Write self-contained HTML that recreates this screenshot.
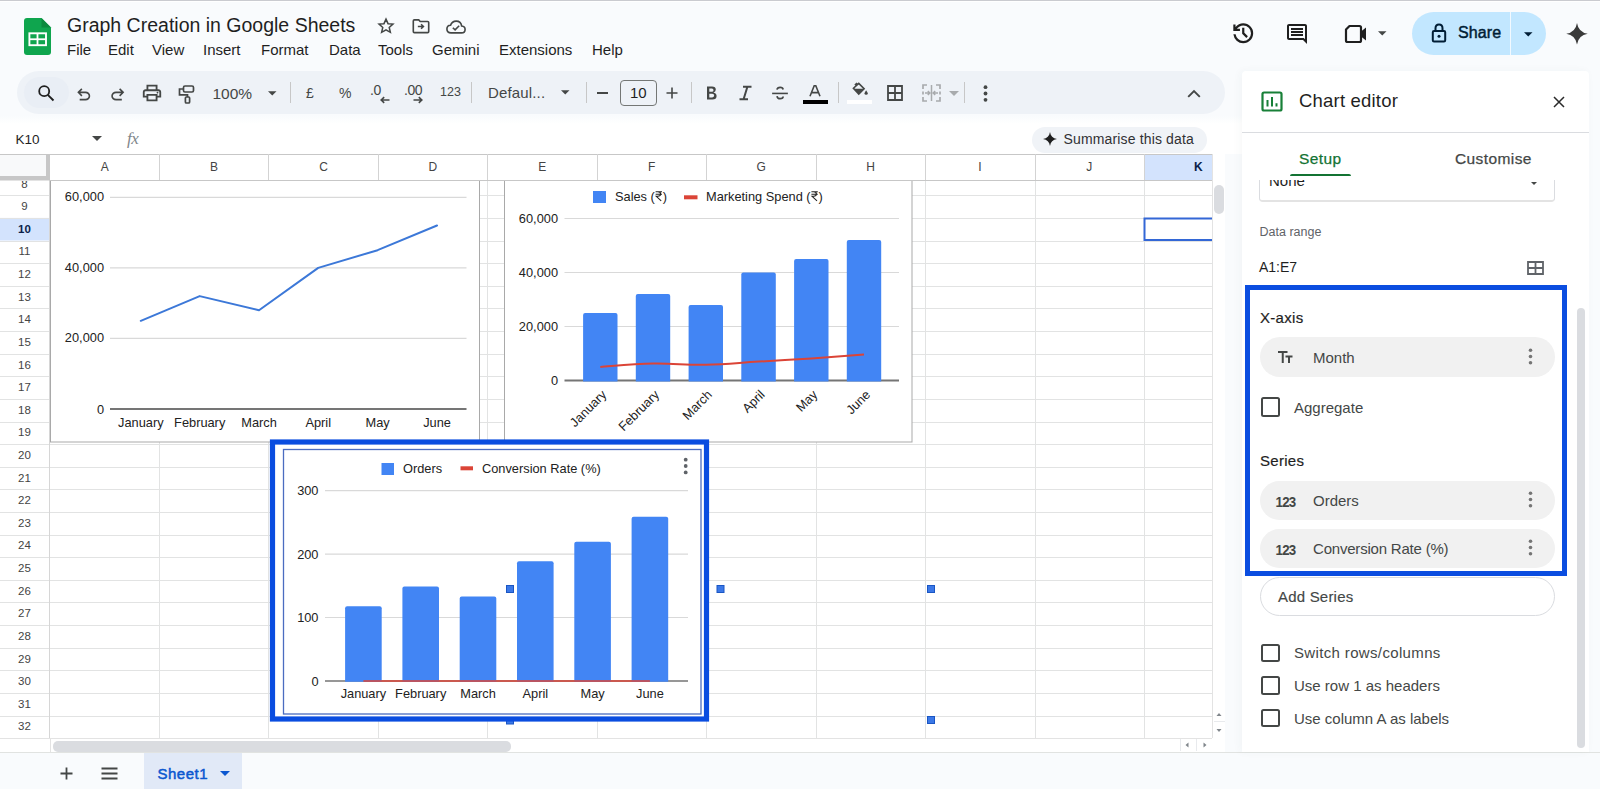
<!DOCTYPE html>
<html><head><meta charset="utf-8">
<style>
*{box-sizing:border-box;margin:0;padding:0}
html,body{width:1600px;height:789px;overflow:hidden;background:#f9fbfd;font-family:"Liberation Sans",sans-serif;color:#1f1f1f;position:relative}
.a{position:absolute}
.t{position:absolute;white-space:nowrap;line-height:1}
svg{position:absolute;overflow:visible}
</style></head><body>
<!-- top line -->
<div class="a" style="left:0;top:0;width:1600px;height:1px;background:#cacbd0"></div><div class="a" style="left:0;top:1px;width:1600px;height:1px;background:#fff"></div>

<!-- logo -->
<svg style="left:24px;top:18px" width="27" height="37" viewBox="0 0 27 37">
<path d="M3 0H17.5L27 9.5V34Q27 37 24 37H3Q0 37 0 34V3Q0 0 3 0Z" fill="#0fa54e"/>
<path d="M17.5 0L27 9.5H17.5Z" fill="#0b8a3e"/>
<rect x="5.4" y="15.3" width="16.6" height="11.9" fill="none" stroke="#fff" stroke-width="1.9"/>
<line x1="5.4" y1="21.25" x2="22" y2="21.25" stroke="#fff" stroke-width="1.8"/>
<line x1="13.5" y1="15.3" x2="13.5" y2="27.2" stroke="#fff" stroke-width="1.8"/>
</svg>

<div class="t" style="left:67px;top:16px;font-size:19.5px;color:#1f1f1f">Graph Creation in Google Sheets</div>

<div id="menu" class="t" style="left:67px;top:42px;font-size:15px;color:#1f1f1f">
<span style="position:absolute;left:0">File</span>
<span style="position:absolute;left:41px">Edit</span>
<span style="position:absolute;left:85px">View</span>
<span style="position:absolute;left:136px">Insert</span>
<span style="position:absolute;left:194px">Format</span>
<span style="position:absolute;left:262px">Data</span>
<span style="position:absolute;left:311px">Tools</span>
<span style="position:absolute;left:365px">Gemini</span>
<span style="position:absolute;left:432px">Extensions</span>
<span style="position:absolute;left:525px">Help</span>
</div>

<!-- title icons -->
<svg style="left:376px;top:17px" width="20" height="18" viewBox="0 0 24 24"><path d="M12 2.8l2.7 6.1 6.6.6-5 4.4 1.5 6.5L12 17l-5.8 3.4 1.5-6.5-5-4.4 6.6-.6z" fill="none" stroke="#444746" stroke-width="2" stroke-linejoin="miter"/></svg>
<svg style="left:411.5px;top:19px" width="18" height="14.5" viewBox="0 0 19 16"><path d="M1 2.2Q1 1 2.2 1H7L8.6 2.7H16.8Q18 2.7 18 3.9V13.8Q18 15 16.8 15H2.2Q1 15 1 13.8Z" fill="none" stroke="#444746" stroke-width="1.8"/><path d="M6 8.3H12M9.6 5.8L12.2 8.3 9.6 10.8" fill="none" stroke="#444746" stroke-width="1.7"/></svg>
<svg style="left:446px;top:19.5px" width="20" height="14" viewBox="0 0 22 15"><path d="M5.5 14Q1 14 1 9.8Q1 5.8 5 5.6Q6.5 1 11.2 1Q16.5 1 17.2 6.4Q21 6.8 21 10.2Q21 14 17 14Z" fill="none" stroke="#444746" stroke-width="1.8"/><path d="M7.5 8.3L10 10.7 14.5 6.2" fill="none" stroke="#444746" stroke-width="1.7"/></svg>

<!-- right header icons -->
<svg style="left:1230px;top:20px" width="26.5" height="26.5" viewBox="0 -960 960 960"><path fill="#1f1f1f" d="M480-120q-138 0-240.5-91.5T122-440h82q14 104 92.5 172T480-200q117 0 198.5-81.5T760-480q0-117-81.5-198.5T480-760q-69 0-129 32t-101 88h110v80H120v-240h80v94q51-64 124.5-99T480-840q75 0 140.5 28.5t114 77q48.5 48.5 77 114T840-480q0 75-28.5 140.5t-77 114q-48.5 48.5-114 77T480-120Zm112-192L440-464v-216h80v184l128 128-56 56Z"/></svg>
<svg style="left:1285px;top:22px" width="24" height="24" viewBox="0 0 24 24"><path fill="#1f1f1f" d="M21.99 4c0-1.1-.89-2-1.99-2H4c-1.1 0-2 .9-2 2v12c0 1.1.9 2 2 2h14l4 4-.01-18zM20 4v13.17L18.83 16H4V4h16zM6 12h12v2H6zm0-3h12v2H6zm0-3h12v2H6z"/></svg>
<svg style="left:1343px;top:21px" width="26" height="26" viewBox="0 0 26 26"><path d="M3 8.5L6.5 5H16.5Q18 5 18 6.5V19.5Q18 21 16.5 21H4.5Q3 21 3 19.5Z" fill="none" stroke="#1f1f1f" stroke-width="2.2" stroke-linejoin="round"/><path d="M18 10.5L23 6.5V19.5L18 15.5Z" fill="#1f1f1f"/></svg>
<svg style="left:1378px;top:31px" width="8.5" height="4.5" viewBox="0 0 10 5"><path d="M0 0H10L5 5Z" fill="#444746"/></svg>
<div class="a" style="left:1412px;top:12px;width:134px;height:43px;background:#c2e7ff;border-radius:22px"></div>
<div class="a" style="left:1509.5px;top:12px;width:1px;height:43px;background:#f2f9ff"></div>
<svg style="left:1431px;top:23px" width="16" height="20" viewBox="0 0 16 20"><rect x="1.8" y="8" width="12.4" height="10.5" rx="1.2" fill="none" stroke="#001d35" stroke-width="2"/><path d="M4.5 8V5.3Q4.5 1.5 8 1.5Q11.5 1.5 11.5 5.3V8" fill="none" stroke="#001d35" stroke-width="2"/><circle cx="8" cy="13.2" r="1.5" fill="#001d35"/></svg>
<div class="t" style="left:1458px;top:24.5px;font-size:16px;color:#001d35;letter-spacing:0.1px;-webkit-text-stroke:0.45px #001d35">Share</div>
<svg style="left:1523.5px;top:31.5px" width="8.5" height="4.5" viewBox="0 0 10 5"><path d="M0 0H10L5 5Z" fill="#001d35"/></svg>
<svg style="left:1565.5px;top:23px" width="22" height="21.5" viewBox="0 0 24 24"><path d="M12 0Q13.6 10.4 24 12Q13.6 13.6 12 24Q10.4 13.6 0 12Q10.4 10.4 12 0Z" fill="#3a3a3a"/></svg>

<!-- toolbar -->
<div class="a" style="left:17px;top:71px;width:1208px;height:43px;background:#eef2f7;border-radius:22px"></div>
<div class="a" style="left:24px;top:77px;width:45px;height:31px;background:#e9eef5;border-radius:16px"></div>
<svg style="left:36px;top:83px" width="20" height="20" viewBox="0 0 20 20"><circle cx="8.2" cy="8.2" r="5" fill="none" stroke="#1f1f1f" stroke-width="1.8"/><path d="M11.8 11.8L17.5 17.5" stroke="#1f1f1f" stroke-width="1.9"/></svg>
<svg style="left:74px;top:84.5px" width="19.5" height="19.5" viewBox="0 -960 960 960"><path fill="#444746" d="M280-200v-80h284q63 0 109.5-40T720-420q0-60-46.5-100T564-560H312l104 104-56 56-200-200 200-200 56 56-104 104h252q97 0 166.5 63T800-420q0 94-69.5 157T564-200H280Z"/></svg>
<svg style="left:107.5px;top:84.5px" width="19.5" height="19.5" viewBox="0 -960 960 960"><path fill="#444746" d="M396-200q-97 0-166.5-63T160-420q0-94 69.5-157T396-640h252L544-744l56-56 200 200-200 200-56-56 104-104H396q-63 0-109.5 40T240-420q0 60 46.5 100T396-280h284v80H396Z"/></svg>
<svg style="left:141px;top:82px" width="22" height="22" viewBox="0 -960 960 960"><path fill="#444746" d="M640-640v-120H320v120h-80v-200h480v200h-80Zm-480 80h640-640Zm560 100q17 0 28.5-11.5T760-500q0-17-11.5-28.5T720-540q-17 0-28.5 11.5T680-500q0 17 11.5 28.5T720-460Zm-80 260v-160H320v160h320Zm80 80H240v-160H80v-240q0-51 35-85.5t85-34.5h560q51 0 85.5 34.5T880-520v240H720v160Zm80-240v-160q0-17-11.5-28.5T760-560H200q-17 0-28.5 11.5T160-520v160h80v-80h480v80h80Z"/></svg>
<svg style="left:177.5px;top:84.5px" width="17" height="19" viewBox="0 0 17 19"><rect x="5.5" y="1" width="10" height="6" rx="1.5" fill="none" stroke="#444746" stroke-width="1.7"/><path d="M5.5 4H1.5V9.8H9.5V12" fill="none" stroke="#444746" stroke-width="1.7"/><rect x="7.4" y="12" width="4.2" height="6" rx="1" fill="none" stroke="#444746" stroke-width="1.7"/></svg>
<div class="t" style="left:212.5px;top:85.5px;font-size:15.5px;color:#444746">100%</div>
<svg style="left:268px;top:91px" width="8.5" height="4.5" viewBox="0 0 10 5"><path d="M0 0H10L5 5Z" fill="#444746"/></svg>
<div class="a" style="left:290px;top:82px;width:1px;height:21px;background:#c7c7c7"></div>
<div class="t" style="left:306px;top:86px;font-size:14px;color:#444746">£</div>
<div class="t" style="left:339px;top:86px;font-size:14px;color:#444746">%</div>
<div class="t" style="left:370px;top:83px;font-size:14px;color:#444746;letter-spacing:-0.5px">.0</div>
<svg style="left:380px;top:96px" width="10" height="8" viewBox="0 0 10 8"><path d="M9.5 4H1.5M4.2 1.2L1.2 4 4.2 6.8" fill="none" stroke="#444746" stroke-width="1.6"/></svg>
<div class="t" style="left:404px;top:83px;font-size:14px;color:#444746;letter-spacing:-0.5px">.00</div>
<svg style="left:413px;top:96px" width="10" height="8" viewBox="0 0 10 8"><path d="M0.5 4H8.5M5.8 1.2L8.8 4 5.8 6.8" fill="none" stroke="#444746" stroke-width="1.6"/></svg>
<div class="t" style="left:440px;top:86px;font-size:12.5px;color:#444746">123</div>
<div class="a" style="left:471px;top:82px;width:1px;height:21px;background:#c7c7c7"></div>
<div class="t" style="left:488px;top:85px;font-size:15px;color:#444746;letter-spacing:0.15px">Defaul...</div>
<svg style="left:561px;top:90px" width="8.5" height="4.5" viewBox="0 0 10 5"><path d="M0 0H10L5 5Z" fill="#444746"/></svg>
<div class="a" style="left:585.5px;top:82px;width:1px;height:21px;background:#c7c7c7"></div>
<div class="a" style="left:597px;top:92px;width:11px;height:1.6px;background:#444746"></div>
<div class="a" style="left:620px;top:80px;width:36.5px;height:25.5px;border:1px solid #747775;border-radius:4px"></div>
<div class="t" style="left:620px;width:36.5px;text-align:center;top:84.5px;font-size:15px;color:#1f1f1f">10</div>
<svg style="left:666px;top:87px" width="12" height="12" viewBox="0 0 12 12"><path d="M6 0.5V11.5M0.5 6H11.5" stroke="#444746" stroke-width="1.6"/></svg>
<div class="a" style="left:691px;top:82px;width:1px;height:21px;background:#c7c7c7"></div>
<svg style="left:705px;top:85px" width="13" height="16" viewBox="0 0 13 16"><path d="M2 1.5H7Q10.8 1.5 10.8 4.6Q10.8 6.9 8.4 7.6Q11.6 8.2 11.6 11Q11.6 14.5 7.4 14.5H2ZM4.3 3.6V6.8H6.9Q8.5 6.8 8.5 5.2Q8.5 3.6 6.9 3.6ZM4.3 8.8V12.4H7.2Q9.2 12.4 9.2 10.6Q9.2 8.8 7.2 8.8Z" fill="#444746"/></svg>
<svg style="left:738px;top:85px" width="15" height="16" viewBox="0 0 15 16"><path d="M5 1.8H13.5M1.5 14.2H10M9.4 1.8L5.6 14.2" fill="none" stroke="#444746" stroke-width="2"/></svg>
<svg style="left:771px;top:86px" width="18" height="14" viewBox="0 0 20 16"><path d="M1 8.5H19" stroke="#444746" stroke-width="1.8"/><path d="M6.5 4.2Q7 1.5 10.2 1.5Q13.2 1.5 13.6 4M6.6 11.5Q7 14.5 10.2 14.5Q13.6 14.5 13.6 12" fill="none" stroke="#444746" stroke-width="1.9"/></svg>
<svg style="left:808px;top:84.5px" width="14" height="12" viewBox="0 0 14 12"><path d="M2 11.3L6.2 0.8H7.8L12 11.3M3.8 7.6H10.2" fill="none" stroke="#444746" stroke-width="1.6"/></svg>
<div class="a" style="left:803px;top:100px;width:24.5px;height:3.8px;background:#000"></div>
<div class="a" style="left:837.5px;top:82px;width:1px;height:21px;background:#c7c7c7"></div>
<svg style="left:850.5px;top:81.5px" width="18" height="15" viewBox="0 0 22 18"><path d="M7.5 1L4.8 3.7M3 7.5L9.5 1.5 16 8 9.5 14.5Z" fill="none" stroke="#444746" stroke-width="2"/><path d="M3.2 8L15.8 8L9.5 14.3Z" fill="#444746"/><path d="M18.5 10Q20.5 12.8 20.5 13.8Q20.5 15.3 18.5 15.3Q16.5 15.3 16.5 13.8Q16.5 12.8 18.5 10Z" fill="#444746"/></svg>
<div class="a" style="left:847px;top:100px;width:25px;height:3.8px;background:#fff"></div>
<svg style="left:887px;top:85px" width="16" height="16" viewBox="0 0 16 16"><path d="M1 1H15V15H1ZM8 1V15M1 8H15" fill="none" stroke="#444746" stroke-width="1.8"/></svg>
<svg style="left:922px;top:84px" width="19" height="18" viewBox="0 0 19 18"><path d="M1 5V1H5M14 1H18V5M1 13V17H5M14 17H18V13M1 7.5V10.5M18 7.5V10.5" fill="none" stroke="#a8abad" stroke-width="1.7"/><path d="M3 9H7.5M5.8 7L7.8 9 5.8 11M16 9H11.5M13.2 7L11.2 9 13.2 11M9.5 1V17" fill="none" stroke="#a8abad" stroke-width="1.5"/></svg>
<svg style="left:949px;top:91px" width="10" height="5" viewBox="0 0 10 5"><path d="M0 0H10L5 5Z" fill="#a8abad"/></svg>
<div class="a" style="left:964px;top:82px;width:1px;height:21px;background:#c7c7c7"></div>
<svg style="left:982px;top:85px" width="7" height="17" viewBox="0 0 7 17"><circle cx="3.5" cy="2.2" r="1.9" fill="#444746"/><circle cx="3.5" cy="8.5" r="1.9" fill="#444746"/><circle cx="3.5" cy="14.8" r="1.9" fill="#444746"/></svg>
<svg style="left:1187px;top:89px" width="14" height="9" viewBox="0 0 14 9"><path d="M1.2 7.8L7 2 12.8 7.8" fill="none" stroke="#444746" stroke-width="1.9"/></svg>

<!-- formula bar -->
<div class="a" style="left:0;top:116px;width:1242px;height:38px;background:linear-gradient(#f9fbfd,#fff 8px)"></div>
<div class="t" style="left:15.5px;top:132.5px;font-size:13.5px;color:#1f1f1f">K10</div>
<svg style="left:92px;top:136px" width="10" height="5" viewBox="0 0 10 5"><path d="M0 0H10L5 5Z" fill="#444746"/></svg>
<div class="t" style="left:127px;top:130px;font-size:17px;color:#80868b;font-family:'Liberation Serif',serif;font-style:italic;letter-spacing:-0.5px">fx</div>
<div class="a" style="left:1032px;top:127px;width:175px;height:25.5px;background:#f0f3f7;border-radius:13px"></div>
<svg style="left:1043px;top:132px" width="14" height="14" viewBox="0 0 24 24"><path d="M12 0C13 7 17 11 24 12C17 13 13 17 12 24C11 17 7 13 0 12C7 11 11 7 12 0Z" fill="#1f1f1f"/></svg>
<div class="t" style="left:1063.5px;top:132px;font-size:14px;color:#303134;letter-spacing:0.15px">Summarise this data</div>

<!-- grid -->
<div class="a" style="left:0;top:154px;width:1225px;height:598px;background:#fff"></div>
<svg style="left:0;top:0" width="1600" height="789">
<rect x="0" y="154" width="1212" height="26" fill="#fff"/>
<rect x="1144.0" y="154.5" width="68.0" height="26" fill="#d3e3fd"/>
<rect x="0" y="217.9" width="49" height="22.62" fill="#d3e3fd"/>
<rect x="0" y="154" width="50" height="26" fill="#f8f9fa"/>
<line x1="0" y1="195.5" x2="1212" y2="195.5" stroke="#e2e3e3" stroke-width="1"/>
<line x1="0" y1="218.5" x2="1212" y2="218.5" stroke="#e2e3e3" stroke-width="1"/>
<line x1="0" y1="241.5" x2="1212" y2="241.5" stroke="#e2e3e3" stroke-width="1"/>
<line x1="0" y1="263.5" x2="1212" y2="263.5" stroke="#e2e3e3" stroke-width="1"/>
<line x1="0" y1="286.5" x2="1212" y2="286.5" stroke="#e2e3e3" stroke-width="1"/>
<line x1="0" y1="308.5" x2="1212" y2="308.5" stroke="#e2e3e3" stroke-width="1"/>
<line x1="0" y1="331.5" x2="1212" y2="331.5" stroke="#e2e3e3" stroke-width="1"/>
<line x1="0" y1="354.5" x2="1212" y2="354.5" stroke="#e2e3e3" stroke-width="1"/>
<line x1="0" y1="376.5" x2="1212" y2="376.5" stroke="#e2e3e3" stroke-width="1"/>
<line x1="0" y1="399.5" x2="1212" y2="399.5" stroke="#e2e3e3" stroke-width="1"/>
<line x1="0" y1="422.5" x2="1212" y2="422.5" stroke="#e2e3e3" stroke-width="1"/>
<line x1="0" y1="444.5" x2="1212" y2="444.5" stroke="#e2e3e3" stroke-width="1"/>
<line x1="0" y1="467.5" x2="1212" y2="467.5" stroke="#e2e3e3" stroke-width="1"/>
<line x1="0" y1="489.5" x2="1212" y2="489.5" stroke="#e2e3e3" stroke-width="1"/>
<line x1="0" y1="512.5" x2="1212" y2="512.5" stroke="#e2e3e3" stroke-width="1"/>
<line x1="0" y1="535.5" x2="1212" y2="535.5" stroke="#e2e3e3" stroke-width="1"/>
<line x1="0" y1="557.5" x2="1212" y2="557.5" stroke="#e2e3e3" stroke-width="1"/>
<line x1="0" y1="580.5" x2="1212" y2="580.5" stroke="#e2e3e3" stroke-width="1"/>
<line x1="0" y1="602.5" x2="1212" y2="602.5" stroke="#e2e3e3" stroke-width="1"/>
<line x1="0" y1="625.5" x2="1212" y2="625.5" stroke="#e2e3e3" stroke-width="1"/>
<line x1="0" y1="648.5" x2="1212" y2="648.5" stroke="#e2e3e3" stroke-width="1"/>
<line x1="0" y1="670.5" x2="1212" y2="670.5" stroke="#e2e3e3" stroke-width="1"/>
<line x1="0" y1="693.5" x2="1212" y2="693.5" stroke="#e2e3e3" stroke-width="1"/>
<line x1="0" y1="716.5" x2="1212" y2="716.5" stroke="#e2e3e3" stroke-width="1"/>
<line x1="0" y1="738.5" x2="1212" y2="738.5" stroke="#e2e3e3" stroke-width="1"/>
<line x1="159.5" y1="154" x2="159.5" y2="738" stroke="#e2e3e3" stroke-width="1"/>
<line x1="268.5" y1="154" x2="268.5" y2="738" stroke="#e2e3e3" stroke-width="1"/>
<line x1="378.5" y1="154" x2="378.5" y2="738" stroke="#e2e3e3" stroke-width="1"/>
<line x1="487.5" y1="154" x2="487.5" y2="738" stroke="#e2e3e3" stroke-width="1"/>
<line x1="597.5" y1="154" x2="597.5" y2="738" stroke="#e2e3e3" stroke-width="1"/>
<line x1="706.5" y1="154" x2="706.5" y2="738" stroke="#e2e3e3" stroke-width="1"/>
<line x1="816.5" y1="154" x2="816.5" y2="738" stroke="#e2e3e3" stroke-width="1"/>
<line x1="925.5" y1="154" x2="925.5" y2="738" stroke="#e2e3e3" stroke-width="1"/>
<line x1="1035.5" y1="154" x2="1035.5" y2="738" stroke="#e2e3e3" stroke-width="1"/>
<line x1="1144.5" y1="154" x2="1144.5" y2="738" stroke="#e2e3e3" stroke-width="1"/>
<line x1="0" y1="154.5" x2="1212" y2="154.5" stroke="#c7c7c7"/>
<line x1="50" y1="180.5" x2="1212" y2="180.5" stroke="#c7c7c7"/>
<line x1="159.5" y1="154" x2="159.5" y2="180" stroke="#d3d3d3"/>
<line x1="268.5" y1="154" x2="268.5" y2="180" stroke="#d3d3d3"/>
<line x1="378.5" y1="154" x2="378.5" y2="180" stroke="#d3d3d3"/>
<line x1="487.5" y1="154" x2="487.5" y2="180" stroke="#d3d3d3"/>
<line x1="597.5" y1="154" x2="597.5" y2="180" stroke="#d3d3d3"/>
<line x1="706.5" y1="154" x2="706.5" y2="180" stroke="#d3d3d3"/>
<line x1="816.5" y1="154" x2="816.5" y2="180" stroke="#d3d3d3"/>
<line x1="925.5" y1="154" x2="925.5" y2="180" stroke="#d3d3d3"/>
<line x1="1035.5" y1="154" x2="1035.5" y2="180" stroke="#d3d3d3"/>
<line x1="1144.5" y1="154" x2="1144.5" y2="180" stroke="#d3d3d3"/>
<line x1="49.5" y1="180" x2="49.5" y2="738" stroke="#d6d6d6"/>
<line x1="1212.5" y1="154" x2="1212.5" y2="752" stroke="#e3e3e3"/>
<rect x="46" y="154" width="4" height="26" fill="#c7c7c7"/>
<rect x="0" y="176" width="50" height="4.5" fill="#c7c7c7"/>
<path d="M1212 218.4H1144.5V240.0H1212" fill="none" stroke="#3367d6" stroke-width="2"/>
</svg>
<div class="t" style="left:84.7px;width:40px;text-align:center;top:161px;font-size:12px;color:#444">A</div>
<div class="t" style="left:194.1px;width:40px;text-align:center;top:161px;font-size:12px;color:#444">B</div>
<div class="t" style="left:303.5px;width:40px;text-align:center;top:161px;font-size:12px;color:#444">C</div>
<div class="t" style="left:412.9px;width:40px;text-align:center;top:161px;font-size:12px;color:#444">D</div>
<div class="t" style="left:522.3px;width:40px;text-align:center;top:161px;font-size:12px;color:#444">E</div>
<div class="t" style="left:631.7px;width:40px;text-align:center;top:161px;font-size:12px;color:#444">F</div>
<div class="t" style="left:741.1px;width:40px;text-align:center;top:161px;font-size:12px;color:#444">G</div>
<div class="t" style="left:850.5px;width:40px;text-align:center;top:161px;font-size:12px;color:#444">H</div>
<div class="t" style="left:959.9px;width:40px;text-align:center;top:161px;font-size:12px;color:#444">I</div>
<div class="t" style="left:1069.3px;width:40px;text-align:center;top:161px;font-size:12px;color:#444">J</div>
<div class="t" style="left:1194px;top:161px;font-size:12px;color:#0b1f4a;font-weight:bold">K</div>
<div class="a" style="left:0;top:180.5px;width:49px;height:558px;overflow:hidden">
<div class="t" style="left:0;width:49px;text-align:center;top:-2.0px;font-size:11.5px;color:#444">8</div>
<div class="t" style="left:0;width:49px;text-align:center;top:20.6px;font-size:11.5px;color:#444">9</div>
<div class="t" style="left:0;width:49px;text-align:center;top:43.2px;font-size:11.5px;color:#0b1f4a;font-weight:bold">10</div>
<div class="t" style="left:0;width:49px;text-align:center;top:65.9px;font-size:11.5px;color:#444">11</div>
<div class="t" style="left:0;width:49px;text-align:center;top:88.5px;font-size:11.5px;color:#444">12</div>
<div class="t" style="left:0;width:49px;text-align:center;top:111.1px;font-size:11.5px;color:#444">13</div>
<div class="t" style="left:0;width:49px;text-align:center;top:133.7px;font-size:11.5px;color:#444">14</div>
<div class="t" style="left:0;width:49px;text-align:center;top:156.3px;font-size:11.5px;color:#444">15</div>
<div class="t" style="left:0;width:49px;text-align:center;top:179.0px;font-size:11.5px;color:#444">16</div>
<div class="t" style="left:0;width:49px;text-align:center;top:201.6px;font-size:11.5px;color:#444">17</div>
<div class="t" style="left:0;width:49px;text-align:center;top:224.2px;font-size:11.5px;color:#444">18</div>
<div class="t" style="left:0;width:49px;text-align:center;top:246.8px;font-size:11.5px;color:#444">19</div>
<div class="t" style="left:0;width:49px;text-align:center;top:269.4px;font-size:11.5px;color:#444">20</div>
<div class="t" style="left:0;width:49px;text-align:center;top:292.1px;font-size:11.5px;color:#444">21</div>
<div class="t" style="left:0;width:49px;text-align:center;top:314.7px;font-size:11.5px;color:#444">22</div>
<div class="t" style="left:0;width:49px;text-align:center;top:337.3px;font-size:11.5px;color:#444">23</div>
<div class="t" style="left:0;width:49px;text-align:center;top:359.9px;font-size:11.5px;color:#444">24</div>
<div class="t" style="left:0;width:49px;text-align:center;top:382.5px;font-size:11.5px;color:#444">25</div>
<div class="t" style="left:0;width:49px;text-align:center;top:405.2px;font-size:11.5px;color:#444">26</div>
<div class="t" style="left:0;width:49px;text-align:center;top:427.8px;font-size:11.5px;color:#444">27</div>
<div class="t" style="left:0;width:49px;text-align:center;top:450.4px;font-size:11.5px;color:#444">28</div>
<div class="t" style="left:0;width:49px;text-align:center;top:473.0px;font-size:11.5px;color:#444">29</div>
<div class="t" style="left:0;width:49px;text-align:center;top:495.6px;font-size:11.5px;color:#444">30</div>
<div class="t" style="left:0;width:49px;text-align:center;top:518.3px;font-size:11.5px;color:#444">31</div>
<div class="t" style="left:0;width:49px;text-align:center;top:540.9px;font-size:11.5px;color:#444">32</div>
</div>
<svg style="left:0;top:0" width="1600" height="789">
<defs><clipPath id="c1"><rect x="0" y="181" width="1212" height="557"/></clipPath></defs>
<g clip-path="url(#c1)">
<rect x="50.5" y="150" width="429" height="292" fill="#fff" stroke="#a9a9a9" stroke-width="1"/>
<line x1="110" y1="197.3" x2="466.5" y2="197.3" stroke="#d9d9d9" stroke-width="1.2"/>
<text x="104" y="201.3" text-anchor="end" font-size="12.8" fill="#222" font-family="Liberation Sans, sans-serif">60,000</text>
<line x1="110" y1="267.8" x2="466.5" y2="267.8" stroke="#d9d9d9" stroke-width="1.2"/>
<text x="104" y="271.8" text-anchor="end" font-size="12.8" fill="#222" font-family="Liberation Sans, sans-serif">40,000</text>
<line x1="110" y1="338.3" x2="466.5" y2="338.3" stroke="#d9d9d9" stroke-width="1.2"/>
<text x="104" y="342.3" text-anchor="end" font-size="12.8" fill="#222" font-family="Liberation Sans, sans-serif">20,000</text>
<line x1="110" y1="409" x2="466.5" y2="409" stroke="#757575" stroke-width="1.8"/>
<text x="104" y="413.6" text-anchor="end" font-size="12.8" fill="#222" font-family="Liberation Sans, sans-serif">0</text>
<polyline points="140.8,320.8 199.7,296.1 259.0,310.2 318.2,267.9 377.6,250.2 437.0,225.5" fill="none" stroke="#3c78d8" stroke-width="2" stroke-linejoin="round" stroke-linecap="round"/>
<text x="140.8" y="427" text-anchor="middle" font-size="12.8" fill="#222" font-family="Liberation Sans, sans-serif">January</text>
<text x="199.7" y="427" text-anchor="middle" font-size="12.8" fill="#222" font-family="Liberation Sans, sans-serif">February</text>
<text x="259" y="427" text-anchor="middle" font-size="12.8" fill="#222" font-family="Liberation Sans, sans-serif">March</text>
<text x="318.2" y="427" text-anchor="middle" font-size="12.8" fill="#222" font-family="Liberation Sans, sans-serif">April</text>
<text x="377.6" y="427" text-anchor="middle" font-size="12.8" fill="#222" font-family="Liberation Sans, sans-serif">May</text>
<text x="437" y="427" text-anchor="middle" font-size="12.8" fill="#222" font-family="Liberation Sans, sans-serif">June</text>
</g></svg>
<svg style="left:0;top:0" width="1600" height="789">
<g clip-path="url(#c1)">
<rect x="504.5" y="150" width="407.5" height="292" fill="#fff" stroke="#a9a9a9" stroke-width="1"/>
<line x1="564.5" y1="218.5" x2="899" y2="218.5" stroke="#d9d9d9" stroke-width="1.2"/>
<text x="558" y="222.5" text-anchor="end" font-size="12.8" fill="#222" font-family="Liberation Sans, sans-serif">60,000</text>
<line x1="564.5" y1="272.5" x2="899" y2="272.5" stroke="#d9d9d9" stroke-width="1.2"/>
<text x="558" y="276.5" text-anchor="end" font-size="12.8" fill="#222" font-family="Liberation Sans, sans-serif">40,000</text>
<line x1="564.5" y1="326.5" x2="899" y2="326.5" stroke="#d9d9d9" stroke-width="1.2"/>
<text x="558" y="330.5" text-anchor="end" font-size="12.8" fill="#222" font-family="Liberation Sans, sans-serif">20,000</text>
<text x="558" y="385.1" text-anchor="end" font-size="12.8" fill="#222" font-family="Liberation Sans, sans-serif">0</text>
<line x1="564.5" y1="380.5" x2="899" y2="380.5" stroke="#757575" stroke-width="1.8"/>
<path d="M583.1 381.4V315.0Q583.1 313.0 585.1 313.0H615.5Q617.5 313.0 617.5 315.0V381.4Z" fill="#4285f4"/>
<path d="M635.8 381.4V296.1Q635.8 294.1 637.8 294.1H668.2Q670.2 294.1 670.2 296.1V381.4Z" fill="#4285f4"/>
<path d="M688.6 381.4V306.9Q688.6 304.9 690.6 304.9H721.0Q723.0 304.9 723.0 306.9V381.4Z" fill="#4285f4"/>
<path d="M741.3 381.4V274.5Q741.3 272.5 743.3 272.5H773.8Q775.8 272.5 775.8 274.5V381.4Z" fill="#4285f4"/>
<path d="M794.1 381.4V261.0Q794.1 259.0 796.1 259.0H826.5Q828.5 259.0 828.5 261.0V381.4Z" fill="#4285f4"/>
<path d="M846.8 381.4V242.1Q846.8 240.1 848.8 240.1H879.2Q881.2 240.1 881.2 242.1V381.4Z" fill="#4285f4"/>
<path d="M600.3 367.0 C610.8 366.3 631.9 363.9 653.0 363.5 C674.1 363.1 684.7 365.2 705.8 364.8 C726.9 364.5 737.4 362.9 758.5 361.6 C779.6 360.3 790.2 359.8 811.3 358.4 C832.4 357.0 853.5 355.3 864.0 354.6" fill="none" stroke="#db4437" stroke-width="2"/>
<text transform="translate(607.3,395.5) rotate(-45)" text-anchor="end" font-size="12.8" fill="#222" font-family="Liberation Sans, sans-serif">January</text>
<text transform="translate(660.0,395.5) rotate(-45)" text-anchor="end" font-size="12.8" fill="#222" font-family="Liberation Sans, sans-serif">February</text>
<text transform="translate(712.8,395.5) rotate(-45)" text-anchor="end" font-size="12.8" fill="#222" font-family="Liberation Sans, sans-serif">March</text>
<text transform="translate(765.5,395.5) rotate(-45)" text-anchor="end" font-size="12.8" fill="#222" font-family="Liberation Sans, sans-serif">April</text>
<text transform="translate(818.3,395.5) rotate(-45)" text-anchor="end" font-size="12.8" fill="#222" font-family="Liberation Sans, sans-serif">May</text>
<text transform="translate(871.0,395.5) rotate(-45)" text-anchor="end" font-size="12.8" fill="#222" font-family="Liberation Sans, sans-serif">June</text>
<rect x="593" y="191" width="13" height="12" fill="#4285f4"/>
<text x="615" y="201" font-size="12.8" fill="#222" font-family="Liberation Sans, sans-serif">Sales (</text>
<g transform="translate(655.6,191.2) scale(1.0)" fill="none" stroke="#222" stroke-width="1.1"><path d="M0 0.6H6.4M0 3.1H6.4M0.4 0.6H2.2Q5 0.6 5 2.9Q5 5.1 2.2 5.1H0.7L5.6 9.6"/></g>
<text x="662.8" y="201" font-size="12.8" fill="#222" font-family="Liberation Sans, sans-serif">)</text>
<rect x="684" y="195.3" width="13.5" height="4" fill="#db4437"/>
<text x="706" y="201" font-size="12.8" fill="#222" font-family="Liberation Sans, sans-serif">Marketing Spend (</text>
<g transform="translate(811.4,191.2) scale(1.0)" fill="none" stroke="#222" stroke-width="1.1"><path d="M0 0.6H6.4M0 3.1H6.4M0.4 0.6H2.2Q5 0.6 5 2.9Q5 5.1 2.2 5.1H0.7L5.6 9.6"/></g>
<text x="818.6" y="201" font-size="12.8" fill="#222" font-family="Liberation Sans, sans-serif">)</text>
</g></svg>
<svg style="left:0;top:0" width="1600" height="789">
<rect x="506.5" y="717" width="7" height="7" fill="#3b78e7" stroke="#1a56c4" stroke-width="1"/>
<rect x="272.5" y="442" width="434" height="277" fill="#fff" stroke="#0a4de0" stroke-width="5.2"/>
<rect x="283.5" y="449.5" width="417.5" height="264.5" fill="#fff" stroke="#4b6cc0" stroke-width="1.3"/>
<line x1="325" y1="490.6" x2="688" y2="490.6" stroke="#d9d9d9" stroke-width="1.2"/>
<text x="318.5" y="495.2" text-anchor="end" font-size="12.8" fill="#222" font-family="Liberation Sans, sans-serif">300</text>
<line x1="325" y1="554.1" x2="688" y2="554.1" stroke="#d9d9d9" stroke-width="1.2"/>
<text x="318.5" y="558.7" text-anchor="end" font-size="12.8" fill="#222" font-family="Liberation Sans, sans-serif">200</text>
<line x1="325" y1="617.5" x2="688" y2="617.5" stroke="#d9d9d9" stroke-width="1.2"/>
<text x="318.5" y="622.1" text-anchor="end" font-size="12.8" fill="#222" font-family="Liberation Sans, sans-serif">100</text>
<text x="318.5" y="685.6" text-anchor="end" font-size="12.8" fill="#222" font-family="Liberation Sans, sans-serif">0</text>
<line x1="325" y1="681" x2="688" y2="681" stroke="#757575" stroke-width="1.6"/>
<path d="M345.1 681.8V608.3Q345.1 606.3 347.1 606.3H379.7Q381.7 606.3 381.7 608.3V681.8Z" fill="#4285f4"/>
<path d="M402.4 681.8V588.6Q402.4 586.6 404.4 586.6H437.0Q439.0 586.6 439.0 588.6V681.8Z" fill="#4285f4"/>
<path d="M459.7 681.8V598.5Q459.7 596.5 461.7 596.5H494.3Q496.3 596.5 496.3 598.5V681.8Z" fill="#4285f4"/>
<path d="M517.0 681.8V563.3Q517.0 561.3 519.0 561.3H551.6Q553.6 561.3 553.6 563.3V681.8Z" fill="#4285f4"/>
<path d="M574.3 681.8V543.8Q574.3 541.8 576.3 541.8H608.9Q610.9 541.8 610.9 543.8V681.8Z" fill="#4285f4"/>
<path d="M631.6 681.8V518.7Q631.6 516.7 633.6 516.7H666.2Q668.2 516.7 668.2 518.7V681.8Z" fill="#4285f4"/>
<line x1="363.4" y1="681" x2="649.9" y2="681" stroke="#db4437" stroke-width="1.3"/>
<text x="363.4" y="697.6" text-anchor="middle" font-size="12.8" fill="#222" font-family="Liberation Sans, sans-serif">January</text>
<text x="420.7" y="697.6" text-anchor="middle" font-size="12.8" fill="#222" font-family="Liberation Sans, sans-serif">February</text>
<text x="478.0" y="697.6" text-anchor="middle" font-size="12.8" fill="#222" font-family="Liberation Sans, sans-serif">March</text>
<text x="535.3" y="697.6" text-anchor="middle" font-size="12.8" fill="#222" font-family="Liberation Sans, sans-serif">April</text>
<text x="592.6" y="697.6" text-anchor="middle" font-size="12.8" fill="#222" font-family="Liberation Sans, sans-serif">May</text>
<text x="649.9" y="697.6" text-anchor="middle" font-size="12.8" fill="#222" font-family="Liberation Sans, sans-serif">June</text>
<rect x="381.5" y="463" width="12.5" height="12" fill="#4285f4"/>
<text x="403" y="472.5" font-size="12.8" fill="#222" font-family="Liberation Sans, sans-serif">Orders</text>
<rect x="460.5" y="466.3" width="12.5" height="4" fill="#db4437"/>
<text x="482" y="472.5" font-size="12.8" fill="#222" font-family="Liberation Sans, sans-serif">Conversion Rate (%)</text>
<circle cx="685.7" cy="459.7" r="1.9" fill="#5f6368"/>
<circle cx="685.7" cy="466" r="1.9" fill="#5f6368"/>
<circle cx="685.7" cy="472.4" r="1.9" fill="#5f6368"/>
<rect x="506.5" y="585.5" width="7" height="7" fill="#3b78e7" stroke="#1a56c4" stroke-width="1"/>
<rect x="717.0" y="585.5" width="7" height="7" fill="#3b78e7" stroke="#1a56c4" stroke-width="1"/>
<rect x="927.5" y="585.5" width="7" height="7" fill="#3b78e7" stroke="#1a56c4" stroke-width="1"/>
<rect x="927.5" y="716.5" width="7" height="7" fill="#3b78e7" stroke="#1a56c4" stroke-width="1"/>
</svg>

<!-- scroll bits in grid -->
<div class="a" style="left:1213.5px;top:185px;width:10.5px;height:29px;background:#dadce0;border-radius:5px"></div>
<div class="a" style="left:0;top:738px;width:1225px;height:14px;background:#fff"></div>
<div class="a" style="left:0;top:738px;width:1212px;height:1px;background:#e3e3e3"></div>
<div class="a" style="left:49.5px;top:738px;width:1px;height:14px;background:#e3e3e3"></div>
<div class="a" style="left:53px;top:741px;width:458px;height:10.5px;background:#dadce0;border-radius:5px"></div>
<svg style="left:1213px;top:704px" width="12" height="34" viewBox="0 0 12 34"><path d="M3.5 12L6 9 8.5 12Z" fill="#80868b"/><path d="M3.5 25L6 28 8.5 25Z" fill="#80868b"/><line x1="1" y1="17.5" x2="12" y2="17.5" stroke="#e8eaed"/></svg>
<svg style="left:1180px;top:739px" width="32" height="12" viewBox="0 0 32 12"><path d="M8.5 3.5L5.5 6 8.5 8.5Z" fill="#80868b"/><path d="M23.5 3.5L26.5 6 23.5 8.5Z" fill="#80868b"/><line x1="16.5" y1="0" x2="16.5" y2="12" stroke="#e8eaed"/><line x1="0.5" y1="0" x2="0.5" y2="12" stroke="#e8eaed"/></svg>

<!-- sheet bar -->
<div class="a" style="left:0;top:752px;width:1600px;height:37px;background:#f9fbfd;border-top:1px solid #e1e3e1"></div>
<svg style="left:60px;top:767px" width="13" height="13" viewBox="0 0 13 13"><path d="M6.5 0.5V12.5M0.5 6.5H12.5" stroke="#444746" stroke-width="1.8"/></svg>
<svg style="left:101px;top:767px" width="17" height="13" viewBox="0 0 17 13"><path d="M0.5 1.5H16.5M0.5 6.5H16.5M0.5 11.5H16.5" stroke="#444746" stroke-width="1.8"/></svg>
<div class="a" style="left:144px;top:753px;width:98px;height:36px;background:#e1e9f7"></div>
<div class="t" style="left:157.5px;top:766px;font-size:15px;color:#0b57d0;letter-spacing:0.5px;-webkit-text-stroke:0.5px #0b57d0">Sheet1</div>
<svg style="left:220px;top:771px" width="10" height="5" viewBox="0 0 10 5"><path d="M0 0H10L5 5Z" fill="#0b57d0"/></svg>

<!-- chart editor -->
<div class="a" style="left:1242px;top:71px;width:346.5px;height:681px;background:#fff;border-radius:4px 4px 0 0;box-shadow:-2px 0 8px rgba(60,64,67,0.04)"></div>
<svg style="left:1261px;top:91px" width="23" height="21" viewBox="0 0 23 21"><rect x="1.5" y="1.5" width="19" height="18" rx="1.5" fill="none" stroke="#188038" stroke-width="2.2"/><path d="M6.5 9V15.5M11 6V15.5M15.5 12.2V15.5" stroke="#188038" stroke-width="2"/></svg>
<div class="t" style="left:1299px;top:91.5px;font-size:18.5px;color:#1f1f1f;letter-spacing:0.2px">Chart editor</div>
<svg style="left:1553px;top:96px" width="12" height="12" viewBox="0 0 12 12"><path d="M1 1L11 11M11 1L1 11" stroke="#2a2a2a" stroke-width="1.5"/></svg>
<div class="a" style="left:1242px;top:132px;width:346.5px;height:1px;background:#dadce0"></div>
<div class="t" style="left:1299px;top:151px;font-size:15.5px;color:#137333;letter-spacing:0.4px;-webkit-text-stroke:0.25px #137333">Setup</div>
<div class="a" style="left:1290px;top:173.5px;width:60.5px;height:2.8px;background:#137333;border-radius:2px 2px 0 0"></div>
<div class="t" style="left:1455px;top:151px;font-size:15.5px;color:#444746;letter-spacing:0.4px;-webkit-text-stroke:0.25px #444746">Customise</div>
<!-- scrolled content clip -->
<div class="a" style="left:1242px;top:179.5px;width:330px;height:572px;overflow:hidden">
  <div class="a" style="left:17px;top:-32px;width:296px;height:54px;border:1px solid #dadce0;border-bottom:2px solid #e3e3e3;border-radius:4px"></div>
  <div class="t" style="left:27px;top:-7px;font-size:15px;color:#1f1f1f">None</div>
  <svg style="left:289px;top:2.5px" width="6" height="3" viewBox="0 0 6 3"><path d="M0 0H6L3 3Z" fill="#444746"/></svg>
</div>
<div class="t" style="left:1259.5px;top:225.5px;font-size:12.5px;color:#5f6368">Data range</div>
<div class="t" style="left:1259px;top:259.5px;font-size:14px;color:#1f1f1f">A1:E7</div>
<svg style="left:1527px;top:260.5px" width="17" height="14" viewBox="0 0 17 14"><path d="M1 1H16V13H1ZM8.5 1V13M1 7H16" fill="none" stroke="#5f6368" stroke-width="1.8"/></svg>

<div class="a" style="left:1244.5px;top:284.5px;width:322px;height:291px;border:5.5px solid #0b4de0"></div>
<div class="t" style="left:1260px;top:309.5px;font-size:15px;color:#1f1f1f;letter-spacing:0.3px;-webkit-text-stroke:0.2px #1f1f1f">X-axis</div>
<div class="a" style="left:1260px;top:337px;width:294.5px;height:39.5px;background:#f1f1f1;border-radius:20px"></div>
<svg style="left:1277px;top:350px" width="17" height="14" viewBox="0 0 17 14"><path d="M1 2H10.5M5.75 2V13M8.5 6.5H15.5M12 6.5V13" fill="none" stroke="#444746" stroke-width="2"/></svg>
<div class="t" style="left:1313px;top:349.5px;font-size:15px;color:#444746">Month</div>
<svg style="left:1526.5px;top:347.5px" width="7" height="17" viewBox="0 0 7 17"><circle cx="3.5" cy="2.2" r="1.8" fill="#757575"/><circle cx="3.5" cy="8.5" r="1.8" fill="#757575"/><circle cx="3.5" cy="14.8" r="1.8" fill="#757575"/></svg>
<div class="a" style="left:1261px;top:397px;width:19px;height:19.5px;border:2px solid #444746;border-radius:2.5px"></div>
<div class="t" style="left:1294px;top:400px;font-size:15px;color:#444746">Aggregate</div>
<div class="t" style="left:1260px;top:453px;font-size:15px;color:#1f1f1f;letter-spacing:0.3px;-webkit-text-stroke:0.2px #1f1f1f">Series</div>

<div class="a" style="left:1260px;top:480.5px;width:294.5px;height:39px;background:#f1f1f1;border-radius:20px"></div>
<div class="t" style="left:1275px;top:495px;font-size:14px;color:#444746;font-weight:bold;letter-spacing:-0.8px;transform:scaleX(0.95)">123</div>
<div class="t" style="left:1313px;top:492.5px;font-size:15px;color:#444746">Orders</div>
<svg style="left:1526.5px;top:491px" width="7" height="17" viewBox="0 0 7 17"><circle cx="3.5" cy="2.2" r="1.8" fill="#757575"/><circle cx="3.5" cy="8.5" r="1.8" fill="#757575"/><circle cx="3.5" cy="14.8" r="1.8" fill="#757575"/></svg>
<div class="a" style="left:1260px;top:528.5px;width:294.5px;height:39px;background:#f1f1f1;border-radius:20px"></div>
<div class="t" style="left:1275px;top:543px;font-size:14px;color:#444746;font-weight:bold;letter-spacing:-0.8px;transform:scaleX(0.95)">123</div>
<div class="t" style="left:1313px;top:540.5px;font-size:15px;color:#444746;letter-spacing:-0.2px">Conversion Rate (%)</div>
<svg style="left:1526.5px;top:539px" width="7" height="17" viewBox="0 0 7 17"><circle cx="3.5" cy="2.2" r="1.8" fill="#757575"/><circle cx="3.5" cy="8.5" r="1.8" fill="#757575"/><circle cx="3.5" cy="14.8" r="1.8" fill="#757575"/></svg>

<div class="a" style="left:1260px;top:577px;width:294.5px;height:38.5px;border:1px solid #dadce0;border-radius:20px"></div>
<div class="t" style="left:1278px;top:588.5px;font-size:15px;color:#444746;letter-spacing:0.2px;-webkit-text-stroke:0.15px #444746">Add Series</div>

<div class="a" style="left:1261px;top:643.5px;width:19px;height:18.5px;border:2px solid #444746;border-radius:2.5px"></div>
<div class="t" style="left:1294px;top:645px;font-size:15px;color:#444746;letter-spacing:0.35px">Switch rows/columns</div>
<div class="a" style="left:1261px;top:676px;width:19px;height:18.5px;border:2px solid #444746;border-radius:2.5px"></div>
<div class="t" style="left:1294px;top:678px;font-size:15px;color:#444746">Use row 1 as headers</div>
<div class="a" style="left:1261px;top:708.5px;width:19px;height:18.5px;border:2px solid #444746;border-radius:2.5px"></div>
<div class="t" style="left:1294px;top:710.5px;font-size:15px;color:#444746">Use column A as labels</div>

<div class="a" style="left:1576.5px;top:308px;width:8px;height:440px;background:#dadce0;border-radius:4px"></div>

</body></html>
